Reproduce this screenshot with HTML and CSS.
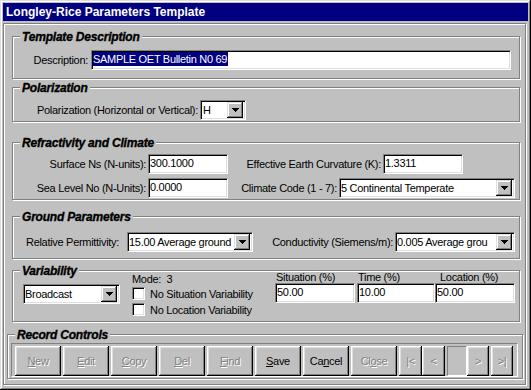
FILE: index.html
```html
<!DOCTYPE html>
<html>
	<head>
		<meta charset="utf-8" />
		<title>Longley-Rice Parameters Template</title>
		<link rel="stylesheet" href="styles.css">
	</head>
	<body>
		<div class="window">
			<div class="titlebar">Longley-Rice Parameters Template</div>

			<div class="client">
				<!-- Template Description -->
				<div class="group group-desc">
					<div class="group-title">Template Description</div>
					<div class="row row-desc">
						<span class="label label-desc">Description:</span>
						<div class="field field-desc"><span class="selected">SAMPLE OET Bulletin N0 69</span></div>
					</div>
				</div>

				<!-- Polarization -->
				<div class="group group-pol">
					<div class="group-title">Polarization</div>
					<div class="row row-pol">
						<span class="label label-pol">Polarization (Horizontal or Vertical):</span>
						<div class="field combo combo-pol">
							<span class="combo-text">H</span>
							<span class="combo-btn"><svg width="7" height="4" viewBox="0 0 7 4"><path d="M0 0h7v1H0zM1 1h5v1H1zM2 2h3v1H2zM3 3h1v1H3z" fill="#000"/></svg></span>
						</div>
					</div>
				</div>

				<!-- Refractivity and Climate -->
				<div class="group group-refr">
					<div class="group-title">Refractivity and Climate</div>
					<div class="row row-refr">
						<span class="label label-refr">Surface Ns (N-units):</span>
						<div class="field field-num">300.1000</div>
						<span class="label label-curv">Effective Earth Curvature (K):</span>
						<div class="field field-num">1.3311</div>
					</div>
					<div class="row row-refr row-second">
						<span class="label label-refr">Sea Level No (N-Units):</span>
						<div class="field field-num">0.0000</div>
						<span class="label label-climate">Climate Code (1 - 7):</span>
						<div class="field combo combo-climate">
							<span class="combo-text">5 Continental Temperate</span>
							<span class="combo-btn"><svg width="7" height="4" viewBox="0 0 7 4"><path d="M0 0h7v1H0zM1 1h5v1H1zM2 2h3v1H2zM3 3h1v1H3z" fill="#000"/></svg></span>
						</div>
					</div>
				</div>

				<!-- Ground Parameters -->
				<div class="group group-ground">
					<div class="group-title">Ground Parameters</div>
					<div class="row row-ground">
						<span class="label label-perm">Relative Permittivity:</span>
						<div class="field combo combo-perm">
							<span class="combo-text">15.00 Average ground</span>
							<span class="combo-btn"><svg width="7" height="4" viewBox="0 0 7 4"><path d="M0 0h7v1H0zM1 1h5v1H1zM2 2h3v1H2zM3 3h1v1H3z" fill="#000"/></svg></span>
						</div>
						<span class="label label-cond">Conductivity (Siemens/m):</span>
						<div class="field combo combo-cond">
							<span class="combo-text">0.005 Average grou</span>
							<span class="combo-btn"><svg width="7" height="4" viewBox="0 0 7 4"><path d="M0 0h7v1H0zM1 1h5v1H1zM2 2h3v1H2zM3 3h1v1H3z" fill="#000"/></svg></span>
						</div>
					</div>
				</div>

				<!-- Variability -->
				<div class="group group-var">
					<div class="group-title">Variability</div>
					<div class="var-body">
						<div class="var-mode-col">
							<div class="field combo combo-var">
								<span class="combo-text">Broadcast</span>
								<span class="combo-btn"><svg width="7" height="4" viewBox="0 0 7 4"><path d="M0 0h7v1H0zM1 1h5v1H1zM2 2h3v1H2zM3 3h1v1H3z" fill="#000"/></svg></span>
							</div>
						</div>
						<div class="var-check-col">
							<div class="mode-line">Mode:&nbsp; 3</div>
							<div class="check-row"><span class="checkbox"></span><span>No Situation Variability</span></div>
							<div class="check-row check-row-second"><span class="checkbox"></span><span>No Location Variability</span></div>
						</div>
						<div class="var-field var-situation">
							<div class="var-label">Situation (%)</div>
							<div class="field field-var">50.00</div>
						</div>
						<div class="var-field var-time">
							<div class="var-label">Time (%)</div>
							<div class="field field-var">10.00</div>
						</div>
						<div class="var-field var-location">
							<div class="var-label">Location (%)</div>
							<div class="field field-var">50.00</div>
						</div>
					</div>
				</div>

				<!-- Record Controls -->
				<div class="group group-record">
					<div class="group-title">Record Controls</div>
					<div class="toolbar">
						<div class="btn disabled"><u>N</u>ew</div>
						<div class="btn disabled"><u>E</u>dit</div>
						<div class="btn disabled"><u>C</u>opy</div>
						<div class="btn disabled"><u>D</u>el</div>
						<div class="btn disabled"><u>F</u>ind</div>
						<div class="btn"><u>S</u>ave</div>
						<div class="btn">Ca<u>n</u>cel</div>
						<div class="btn disabled">Cl<u>o</u>se</div>
						<div class="btn nav nav-wide disabled">|&lt;</div>
						<div class="btn nav nav-wide disabled">&lt;</div>
						<div class="position-box"></div>
						<div class="btn nav disabled">&gt;</div>
						<div class="btn nav nav-last disabled">&gt;|</div>
					</div>
				</div>
			</div>
		</div>
	</body>
</html>
```

FILE: styles.css
```css
body {
	margin: 0;
	background: #c0c0c0;
	font-family: 'Liberation Sans', Arial, sans-serif;
	font-size: 11px;
	letter-spacing: -0.3px;
	color: #000;
}

/* Window frame */
.window {
	box-sizing: border-box;
	width: 531px;
	height: 390px;
	padding: 3px;
	display: flex;
	flex-direction: column;
	background: #c0c0c0;
	box-shadow: inset -1px -1px #000, inset 1px 1px #dfdfdf, inset -2px -2px #808080, inset 2px 2px #fff;
}

.titlebar {
	height: 18px;
	line-height: 18px;
	padding-left: 3px;
	background: #000080;
	color: #fff;
	font-size: 12px;
	font-weight: bold;
	letter-spacing: 0;
	white-space: nowrap;
}

.client {
	flex: 1;
	margin: 2px 2px 2px 0;
	padding: 0 5px 0 8px;
	border: 1px solid #808080;
	box-shadow: inset 1px 1px #fff, 1px 1px #fff;
}

/* Group boxes */
.group {
	border: 1px solid #808080;
	box-shadow: inset 1px 1px #fff, 1px 1px #fff;
}

.group-title {
	width: fit-content;
	margin: -7px 0 0 7px;
	padding: 0 2px;
	line-height: 14px;
	background: #c0c0c0;
	font-size: 12px;
	font-weight: bold;
	font-style: italic;
	letter-spacing: -0.2px;
	-webkit-text-stroke: 0.35px #000;
	white-space: nowrap;
}

.group-desc {
	margin-top: 12px;
	padding-bottom: 8px;
}

.group-pol {
	margin-top: 8px;
	padding-bottom: 1px;
}

.group-refr {
	margin-top: 20px;
	padding-bottom: 1px;
}

.group-ground {
	margin-top: 16px;
	padding-bottom: 6px;
}

.group-var {
	margin-top: 11px;
	padding-bottom: 5px;
}

.group-record {
	margin: 12px -3px 0 -5px;
	padding-bottom: 1px;
}

/* Rows and labels */
.row {
	display: flex;
	align-items: center;
	height: 20px;
}

.label {
	box-sizing: border-box;
	white-space: nowrap;
	text-align: right;
	padding-right: 2px;
}

.row-desc { margin-top: 6px; }
.label-desc { width: 78px; padding-right: 3px; }

.row-pol { margin-top: 5px; }
.label-pol { width: 187px; }

.row-refr { margin-top: 4px; }
.label-refr { width: 135px; }
.label-curv { width: 155px; }
.label-climate { width: 111px; }

.row-ground { margin-top: 8px; }
.label-perm { width: 114px; text-align: left; padding-left: 13px; }
.label-cond { width: 142px; }

/* Sunken text fields */
.field {
	box-sizing: border-box;
	height: 20px;
	line-height: 17px;
	padding-left: 1px;
	background: #fff;
	border: 1px solid;
	border-color: #808080 #fff #fff #808080;
	box-shadow: inset 1px 1px #000, inset -1px -1px #dfdfdf;
	white-space: nowrap;
	overflow: hidden;
}

.field-desc {
	width: 420px;
	padding: 1px 0 0 1px;
	line-height: 14px;
}

.selected {
	display: inline-block;
	background: #000080;
	color: #fff;
	padding: 0 1px 0 0;
	line-height: 14px;
}

.field-num { width: 80px; }

/* Combo boxes */
.combo {
	display: flex;
	align-items: center;
	padding: 0 2px 0 1px;
}

.combo-text {
	flex: 1;
	overflow: hidden;
	white-space: nowrap;
}

.combo-btn {
	box-sizing: border-box;
	width: 16px;
	height: 16px;
	display: flex;
	align-items: center;
	justify-content: center;
	background: #c0c0c0;
	box-shadow: inset -1px -1px #000, inset 1px 1px #dfdfdf, inset -2px -2px #808080, inset 2px 2px #fff;
}

.combo-pol { width: 46px; padding-left: 2px; }
.combo-climate { width: 176px; }
.combo-perm { width: 126px; }
.combo-cond { width: 120px; }
.combo-var { width: 97px; }

/* Variability */
.var-body {
	display: flex;
	margin-top: -6px;
}

.var-mode-col {
	padding: 12px 0 0 10px;
}

.var-check-col {
	width: 143px;
	margin-left: 12px;
}

.mode-line {
	line-height: 14px;
}

.check-row {
	display: flex;
	align-items: center;
	gap: 5px;
	height: 13px;
	margin-top: 1px;
}

.check-row-second {
	margin-top: 3px;
}

.checkbox {
	box-sizing: border-box;
	width: 13px;
	height: 13px;
	background: #fff;
	border: 1px solid;
	border-color: #808080 #fff #fff #808080;
	box-shadow: inset 1px 1px #000, inset -1px -1px #dfdfdf;
}

.var-label {
	line-height: 11px;
	padding-left: 1px;
	white-space: nowrap;
}

.var-situation { width: 80px; }
.var-time { width: 78px; margin-left: 2px; }
.var-location { width: 80px; }
.var-location .var-label { padding-left: 5px; }

.field-var { width: 100%; }

/* Record controls toolbar */
.toolbar {
	display: flex;
	margin: 1px 4px 0 3px;
	padding: 2px 4px 0 3px;
	border: 1px solid;
	border-color: #808080 #fff #fff #808080;
}

.btn {
	box-sizing: border-box;
	width: 46px;
	height: 30px;
	margin-right: 2px;
	display: flex;
	align-items: center;
	justify-content: center;
	background: #c0c0c0;
	box-shadow: inset -1px -1px #000, inset 1px 1px #fff, inset -2px -2px #808080, inset 2px 2px #dfdfdf;
	white-space: nowrap;
}

.btn.disabled {
	color: #808080;
	text-shadow: 1px 1px #fff;
}

.btn.nav {
	width: 22px;
}

.btn.nav-wide {
	width: 23px;
	margin-right: 0;
}

.btn.nav-last {
	margin-right: 0;
}

.position-box {
	box-sizing: border-box;
	width: 20px;
	height: 30px;
	margin-left: 2px;
	border: 1px solid;
	border-color: #808080 #fff #fff #808080;
}
```
